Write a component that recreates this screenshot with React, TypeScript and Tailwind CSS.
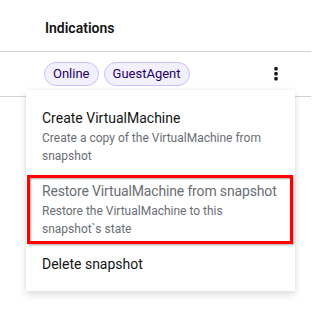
import React from "react";

function Kebab() {
  return (
    <svg width="4" height="14" viewBox="0 0 4 14" className="block">
      <rect x="0.3" y="0" width="3.4" height="3.4" rx="1" fill="#151515" />
      <rect x="0.3" y="5" width="3.4" height="3.4" rx="1" fill="#151515" />
      <rect x="0.3" y="10" width="3.4" height="3.4" rx="1" fill="#151515" />
    </svg>
  );
}

export default function App() {
  const font = { fontFamily: 'Roboto, "Noto Sans", sans-serif' };
  return (
    <div className="relative w-[320px] h-[312px] bg-white overflow-hidden text-[#151515]" style={font}>
      <div className="w-[311px]">
        <div className="h-[52px] border-b border-[#d2d2d2] flex items-end pb-[12px] pl-[45px]">
          <span className="text-[14px] font-semibold leading-[21px]">Indications</span>
        </div>
        <div className="h-[45px] border-b border-[#d2d2d2] flex items-center pl-[44px] pr-[33px]">
          <div className="flex gap-[5px]">
            <span className="h-[24px] px-[8px] rounded-full border border-[#cbc1ff] bg-[#f2f0fc] text-[#1f0066] text-[13px] leading-[22px]">Online</span>
            <span className="h-[24px] px-[8px] rounded-full border border-[#cbc1ff] bg-[#f2f0fc] text-[#1f0066] text-[13px] leading-[22px]">GuestAgent</span>
          </div>
          <div className="ml-auto">
            <Kebab />
          </div>
        </div>
      </div>

      <div className="absolute left-[26px] top-[90px] w-[269px] bg-white pt-[10px] pb-[8px] shadow-[0_4px_8px_0_rgba(3,3,3,0.12),0_0_4px_0_rgba(3,3,3,0.06)]">
        <div className="px-[16px] py-[8px]">
          <div className="text-[14px] leading-[21px] text-[#151515]">Create VirtualMachine</div>
          <div className="text-[12px] leading-[18px] text-[#6a6e73]">Create a copy of the VirtualMachine from snapshot</div>
        </div>
        <div className="relative px-[16px] py-[8px]">
          <div className="text-[14px] leading-[21px] text-[#6a6e73] whitespace-nowrap tracking-[-0.15px]">Restore VirtualMachine from snapshot</div>
          <div className="text-[12px] leading-[18px] text-[#6a6e73]">Restore the VirtualMachine to this snapshot`s state</div>
          <div className="absolute left-[1px] right-[2px] top-[2px] bottom-[2px] border-[3px] border-[#ff0000] shadow-[1px_1px_2px_rgba(0,0,0,0.35),inset_1px_1px_2px_rgba(0,0,0,0.35)]" />
        </div>
        <div className="px-[16px] py-[8px]">
          <div className="text-[14px] leading-[21px] text-[#151515]">Delete snapshot</div>
        </div>
      </div>
    </div>
  );
}
